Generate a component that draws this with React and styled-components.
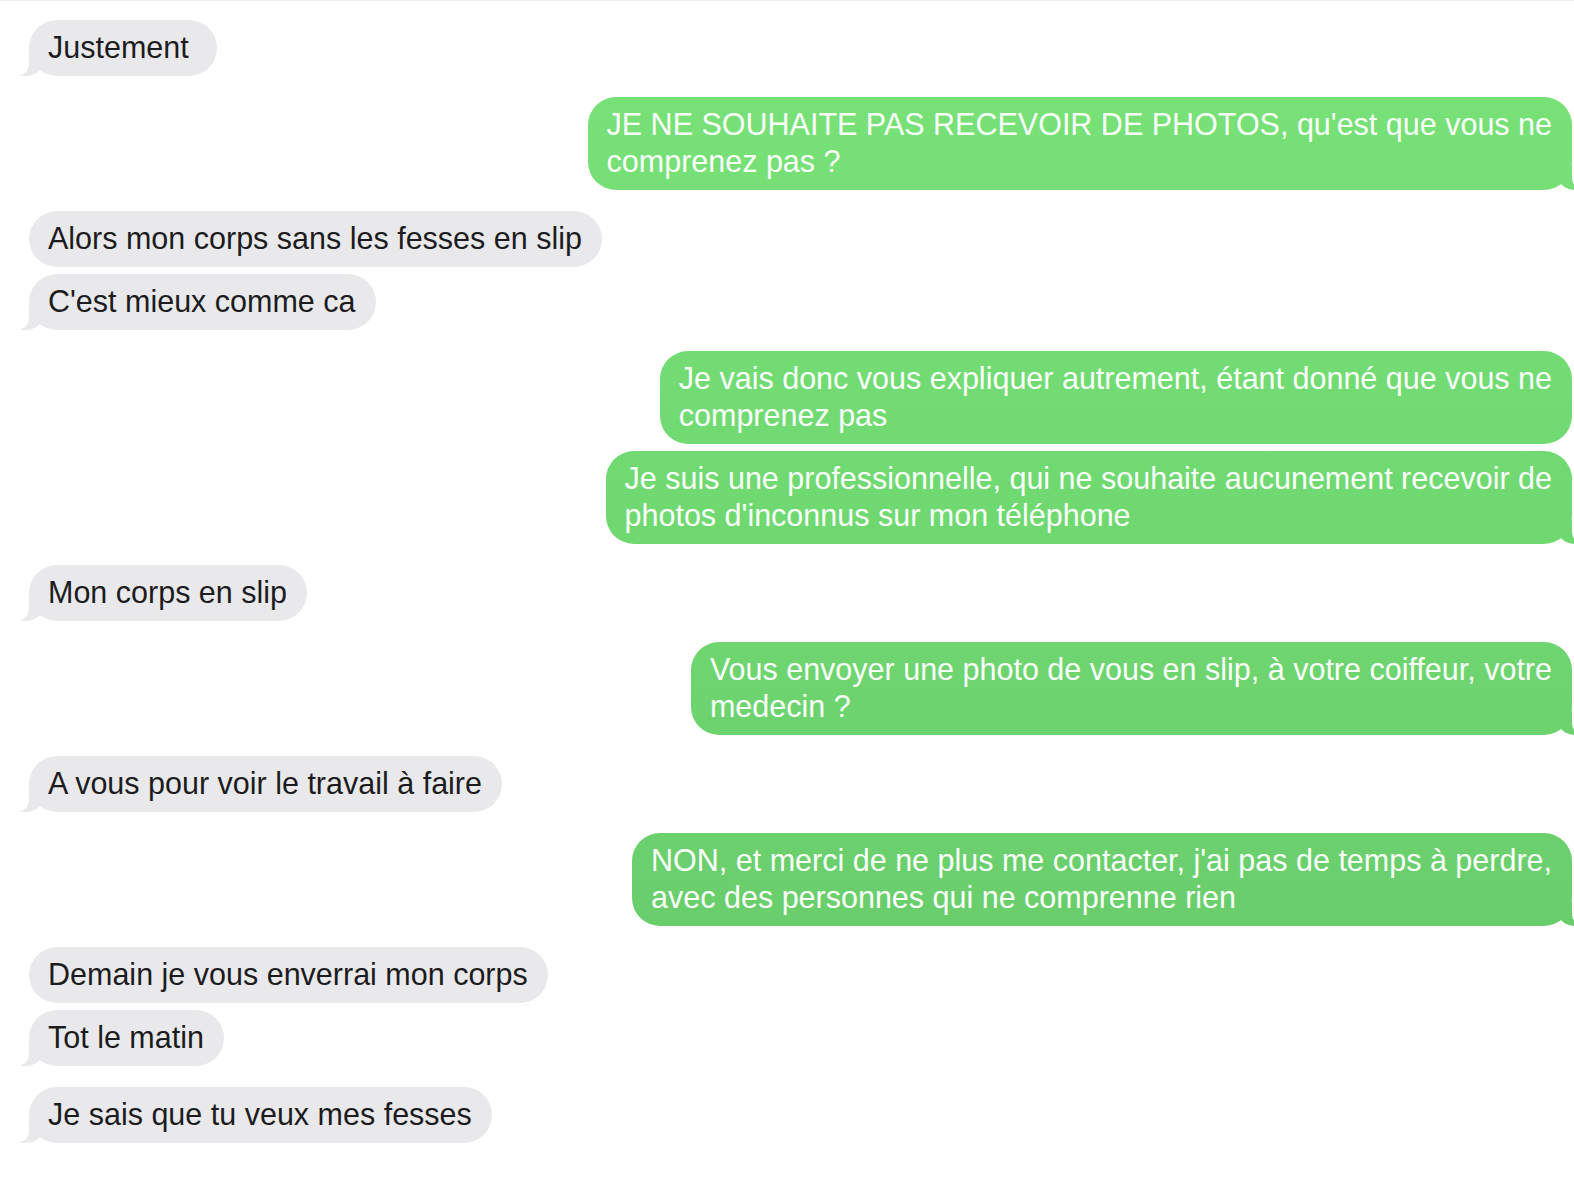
import React from 'react';
import styled, {createGlobalStyle, css} from 'styled-components';

const GlobalStyle = createGlobalStyle`
  html, body {
    margin: 0;
    padding: 0;
    background: #ffffff;
  }
  body {
    font-family: "Liberation Sans", Arial, sans-serif;
    -webkit-font-smoothing: antialiased;
  }
`;

const Thread = styled.div`
  display: flex;
  flex-direction: column;
  padding: 19px 2px 30px 29px;
  border-top: 1px solid #eeeeee;
  box-sizing: border-box;
  min-height: 1178px;
  overflow: hidden;
`;

const Group = styled.div`
  display: flex;
  flex-direction: column;
  align-items: ${props => (props.sent ? 'flex-end' : 'flex-start')};
  gap: 7px;
  & + & {
    margin-top: 21px;
  }
`;

const tailReceived = css`
  &::before {
    content: '';
    position: absolute;
    bottom: 0;
    left: -9px;
    width: 24px;
    height: 24px;
    background: #e9e9eb;
    border-bottom-right-radius: 18px 16px;
  }
  &::after {
    content: '';
    position: absolute;
    bottom: 0;
    left: -28px;
    width: 28px;
    height: 26px;
    background: #ffffff;
    border-bottom-right-radius: 12px;
  }
`;

const tailSent = css`
  &::before {
    content: '';
    position: absolute;
    bottom: 0;
    right: -9px;
    width: 24px;
    height: 24px;
    background: inherit;
    background-attachment: fixed;
    border-bottom-left-radius: 18px 16px;
  }
  &::after {
    content: '';
    position: absolute;
    bottom: 0;
    right: -28px;
    width: 28px;
    height: 26px;
    background: #ffffff;
    border-bottom-left-radius: 12px;
  }
`;

const Bubble = styled.div`
  position: relative;
  box-sizing: border-box;
  width: fit-content;
  min-width: ${props => (props.sent ? '0' : '188px')};
  padding: 8.5px 20px 10.5px 19px;
  border-radius: 28px;
  font-size: 30.5px;
  line-height: 37px;
  white-space: nowrap;
  color: ${props => (props.sent ? '#fbfffb' : '#1c1c1e')};
  background: ${props =>
    props.sent
      ? 'linear-gradient(180deg, #79e378 0%, #70d871 45%, #65c768 100%) fixed'
      : '#e9e9eb'};
  ${props => props.tail && (props.sent ? tailSent : tailReceived)}
`;

const Line = styled.span`
  display: block;
`;

const conversation = [
  {sent: false, messages: [['Justement']]},
  {
    sent: true,
    messages: [
      ["JE NE SOUHAITE PAS RECEVOIR DE PHOTOS, qu'est que vous ne", 'comprenez pas ?'],
    ],
  },
  {
    sent: false,
    messages: [['Alors mon corps sans les fesses en slip'], ["C'est mieux comme ca"]],
  },
  {
    sent: true,
    messages: [
      ['Je vais donc vous expliquer autrement, étant donné que vous ne', 'comprenez pas'],
      [
        'Je suis une professionnelle, qui ne souhaite aucunement recevoir de',
        "photos d'inconnus sur mon téléphone",
      ],
    ],
  },
  {sent: false, messages: [['Mon corps en slip']]},
  {
    sent: true,
    messages: [
      ['Vous envoyer une photo de vous en slip, à votre coiffeur, votre', 'medecin ?'],
    ],
  },
  {sent: false, messages: [['A vous pour voir le travail à faire']]},
  {
    sent: true,
    messages: [
      [
        "NON, et merci de ne plus me contacter, j'ai pas de temps à perdre,",
        'avec des personnes qui ne comprenne rien',
      ],
    ],
  },
  {
    sent: false,
    messages: [['Demain je vous enverrai mon corps'], ['Tot le matin']],
  },
  {sent: false, messages: [['Je sais que tu veux mes fesses']]},
];

export default function App() {
  return (
    <>
      <GlobalStyle />
      <Thread>
        {conversation.map((group, gi) => (
          <Group key={gi} sent={group.sent}>
            {group.messages.map((lines, mi) => (
              <Bubble
                key={mi}
                sent={group.sent}
                tail={mi === group.messages.length - 1}>
                {lines.map((text, li) => (
                  <Line key={li}>{text}</Line>
                ))}
              </Bubble>
            ))}
          </Group>
        ))}
      </Thread>
    </>
  );
}
